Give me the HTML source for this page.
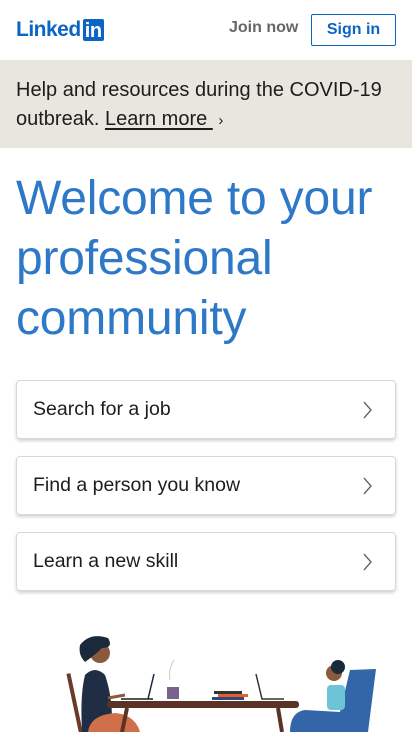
<!DOCTYPE html>
<html><head><meta charset="utf-8"><style>
*{margin:0;padding:0;box-sizing:border-box}
body{width:412px;height:732px;overflow:hidden;background:#fff;font-family:"Liberation Sans",Arial,sans-serif;position:relative}
.logo{position:absolute;left:16px;top:18px;font-weight:bold;color:#0a66c2;font-size:21px;letter-spacing:-0.5px;display:flex;align-items:center}
.logo .in{background:#0a66c2;color:#fff;border-radius:2px;width:21px;height:22px;display:inline-block;text-align:center;line-height:24px;margin-left:2px;font-size:20px}
.join{position:absolute;left:229px;top:19px;font-size:16px;font-weight:bold;color:#666}
.sign{position:absolute;left:311px;top:14px;width:85px;height:32px;border:1px solid #0a66c2;border-radius:2px;color:#0a66c2;font-weight:bold;font-size:16px;text-align:center;line-height:30px}
.banner{position:absolute;left:0;top:60px;width:412px;height:88px;background:#e9e5df;padding:16px 16px;font-size:20px;line-height:29px;color:#1d1d1d}
.banner u{text-underline-offset:3px}
h1{position:absolute;left:16px;top:169px;font-weight:normal;color:#2e78c8;font-size:48px;line-height:60px;letter-spacing:-0.2px;white-space:nowrap}
.card{position:absolute;left:16px;width:380px;height:59px;border:1px solid #d8d8d8;border-radius:4px;box-shadow:0 2px 3px rgba(0,0,0,.18);font-size:19.5px;color:#1d1d1d;padding-left:16px;line-height:57px}
.card svg{position:absolute;right:22px;top:20px}
</style></head><body>
<div class="logo">Linked<span class="in">in</span></div>
<div class="join">Join now</div>
<div class="sign">Sign in</div>
<div class="banner">Help and resources during the COVID-19 outbreak. <u>Learn more&nbsp;</u> <span style="font-size:15px">›</span></div>
<h1>Welcome to your<br>professional<br>community</h1>
<div class="card" style="top:380px">Search for a job<svg width="10" height="18"><path d="M1 1l7 8-7 8" fill="none" stroke="#666" stroke-width="1.4"/></svg></div>
<div class="card" style="top:456px">Find a person you know<svg width="10" height="18"><path d="M1 1l7 8-7 8" fill="none" stroke="#666" stroke-width="1.4"/></svg></div>
<div class="card" style="top:532px">Learn a new skill<svg width="10" height="18"><path d="M1 1l7 8-7 8" fill="none" stroke="#666" stroke-width="1.4"/></svg></div>
<svg style="position:absolute;left:0;top:600px" width="412" height="132">
<rect x="72" y="73" width="4" height="60" fill="#6b3a2a" transform="rotate(-12 74 100)"/>
<path d="M82 130 Q80 95 85 75 Q95 65 105 75 Q112 95 112 120 L112 132 L82 132Z" fill="#1f2e44"/>
<path d="M88 132 Q90 115 115 113 Q135 115 140 132Z" fill="#d0704a"/>
<circle cx="100" cy="53" r="10" fill="#8b5a3c"/>
<path d="M80 45 Q90 32 108 38 Q114 48 102 48 Q95 55 85 62 Q78 55 80 45Z" fill="#1a2a3a"/>
<path d="M108 98 L125 95" stroke="#8b5a3c" stroke-width="3"/>
<rect x="121" y="98" width="32" height="2" fill="#555"/>
<path d="M148 99 L154 74" stroke="#1a2a3a" stroke-width="1.5"/>
<rect x="167" y="87" width="12" height="12" fill="#7a628e"/>
<path d="M170 80 Q168 70 174 60" stroke="#ccc" fill="none"/>
<rect x="214" y="91" width="28" height="3" fill="#333"/>
<rect x="218" y="94" width="30" height="3" fill="#e06030"/>
<rect x="212" y="97" width="32" height="3" fill="#2c4a7a"/>
<path d="M256 74 L262 99 L284 99" stroke="#333" fill="none" stroke-width="1.5"/>
<rect x="107" y="101" width="192" height="7" rx="3" fill="#5a3226"/>
<path d="M127 108 L122 132 M278 108 L282 132" stroke="#5a3226" stroke-width="4"/>
<path d="M290 132 Q290 112 305 110 L340 112 L350 70 L376 69 L368 132Z" fill="#3266a8"/>
<rect x="327" y="85" width="18" height="25" rx="4" fill="#6bc4d8"/>
<circle cx="334" cy="73" r="8" fill="#8b5a3c"/>
<circle cx="338" cy="67" r="7" fill="#1a2a3a"/>
</svg>
</body></html>
